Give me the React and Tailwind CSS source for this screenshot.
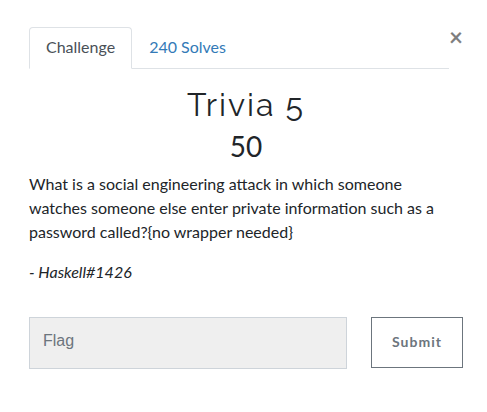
import React, { useState } from "react";

export default function App() {
  const [tab, setTab] = useState("challenge");
  const active = "rounded-t border-[#dee2e6] border-b-white bg-white text-[#495057]";
  const idle = "border-transparent text-[#337ab7]";

  return (
    <main
      role="dialog"
      aria-labelledby="challenge-name"
      className="min-h-screen bg-white pt-[27px] pr-6 pb-10 pl-[29px] font-['Lato',sans-serif] text-base text-[#212529]"
    >
      <header className="flex items-start">
        <div role="tablist" className="flex flex-1 border-b border-[#dee2e6]">
          <button
            type="button"
            role="tab"
            aria-selected={tab === "challenge"}
            onClick={() => setTab("challenge")}
            className={`-mb-px border px-4 pt-[7px] pb-[9px] ${tab === "challenge" ? active : idle}`}
          >
            Challenge
          </button>
          <button
            type="button"
            role="tab"
            aria-selected={tab === "solves"}
            onClick={() => setTab("solves")}
            className={`-mb-px border px-4 pt-[7px] pb-[9px] ${tab === "solves" ? active : idle}`}
          >
            240 Solves
          </button>
        </div>
        <button
          type="button"
          aria-label="Close"
          className="text-2xl leading-5 font-bold text-black opacity-50"
        >
          ×
        </button>
      </header>

      <h2
        id="challenge-name"
        className="mt-4 text-center font-['Raleway','Lato',sans-serif] text-[32px] leading-10 font-normal tracking-[2px]"
      >
        Trivia 5
      </h2>
      <h3 className="text-center text-[28px] leading-[42px]">50</h3>

      <div className="mt-[5px]">
        <p>
          What is a social engineering attack in which someone watches someone else enter private
          information such as a password called?&#123;no wrapper needed&#125;
        </p>
        <p className="mt-4 italic">- Haskell#1426</p>
      </div>

      <form className="mt-[33px] flex items-start gap-6" onSubmit={(event) => event.preventDefault()}>
        <input
          type="text"
          aria-label="Flag"
          placeholder="Flag"
          className="h-[52px] min-w-0 flex-1 border border-[#ced4da] bg-[#efefef] px-[13px] pb-1 font-['Liberation_Sans',sans-serif] placeholder:text-[#6c757d]"
        />
        <button
          type="submit"
          className="h-[51px] w-[92px] border border-[#6c757d] pb-0.5 text-sm font-bold tracking-[1px] text-[#6c757d]"
        >
          Submit
        </button>
      </form>
    </main>
  );
}
